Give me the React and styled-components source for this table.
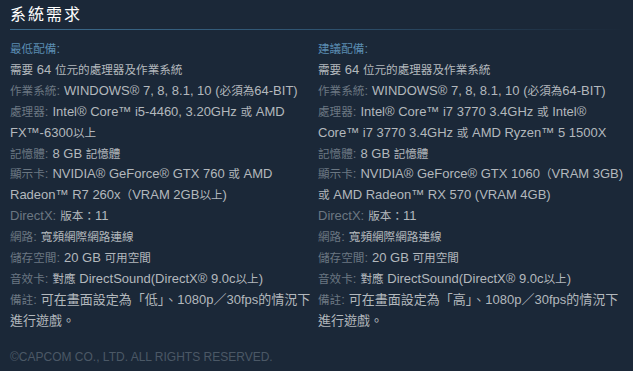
import React from "react";
import styled, { createGlobalStyle } from "styled-components";

const GlobalStyle = createGlobalStyle`
  html, body {
    margin: 0;
    padding: 0;
    background: #1b2838;
  }
  body {
    font-family: "Liberation Sans", Arial, "Noto Sans CJK TC", sans-serif;
  }
`;

const Wrapper = styled.div`
  width: 633px;
  height: 371px;
  box-sizing: border-box;
  padding: 4px 10px 0 10px;
  background: #1b2838;
  color: #b3b8bd;
  overflow: hidden;
`;

const Title = styled.h2`
  margin: 0;
  font-size: 16px;
  font-weight: normal;
  letter-spacing: 2px;
  color: #ffffff;
  line-height: 22px;
  padding-bottom: 3px;
  border-bottom: 1px solid transparent;
  border-image: linear-gradient(to right, #3d6c8d 0%, #2f5370 50%, #1b2838 100%) 1;
`;

const Columns = styled.div`
  display: grid;
  grid-template-columns: 304px 308px;
  column-gap: 4px;
  margin-top: 9px;
`;

const Column = styled.div`
  font-size: 13px;
  line-height: 20.9px;
`;

const Heading = styled.div`
  color: #5a8cb1;
`;

const List = styled.ul`
  list-style: none;
  margin: 0;
  padding: 0;
`;

const Cjk = styled.span`
  font-family: "Noto Sans CJK TC", sans-serif;
  font-size: 11.6px;
  line-height: 1;
`;

const Item = styled.li`
  margin: 0;
  ${Cjk} {
    font-size: ${(p) => (p.$wide ? "13px" : "11.6px")};
  }
`;

const Label = styled.span`
  color: #6b7782;
  margin-right: 4px;
  ${Cjk} {
    font-size: 11.6px;
  }
`;

const Copyright = styled.div`
  margin-top: 18px;
  font-size: 12px;
  color: #4b5866;
`;

const CJK_RE = /([\u3000-\u303f\u3400-\u9fff\uff00-\uffef]+)/;

const Text = ({ children }) =>
  children.split(CJK_RE).map((part, i) =>
    i % 2 === 1 ? <Cjk key={i}>{part}</Cjk> : part
  );

const minimum = [
  [null, "需要 64 位元的處理器及作業系統"],
  ["作業系統:", "WINDOWS® 7, 8, 8.1, 10 (必須為64-BIT)"],
  ["處理器:", "Intel® Core™ i5-4460, 3.20GHz 或 AMD FX™-6300以上"],
  ["記憶體:", "8 GB 記憶體"],
  ["顯示卡:", "NVIDIA® GeForce® GTX 760 或 AMD Radeon™ R7 260x（VRAM 2GB以上)"],
  ["DirectX:", "版本：11"],
  ["網路:", "寬頻網際網路連線"],
  ["儲存空間:", "20 GB 可用空間"],
  ["音效卡:", "對應 DirectSound(DirectX® 9.0c以上)"],
  ["備註:", "可在畫面設定為「低」、1080p／30fps的情況下進行遊戲。", true],
];

const recommended = [
  [null, "需要 64 位元的處理器及作業系統"],
  ["作業系統:", "WINDOWS® 7, 8, 8.1, 10 (必須為64-BIT)"],
  ["處理器:", "Intel® Core™ i7 3770 3.4GHz 或 Intel® Core™ i7 3770 3.4GHz 或 AMD Ryzen™ 5 1500X"],
  ["記憶體:", "8 GB 記憶體"],
  ["顯示卡:", "NVIDIA® GeForce® GTX 1060（VRAM 3GB) 或 AMD Radeon™ RX 570 (VRAM 4GB)"],
  ["DirectX:", "版本：11"],
  ["網路:", "寬頻網際網路連線"],
  ["儲存空間:", "20 GB 可用空間"],
  ["音效卡:", "對應 DirectSound(DirectX® 9.0c以上)"],
  ["備註:", "可在畫面設定為「高」、1080p／30fps的情況下進行遊戲。", true],
];

const ReqColumn = ({ title, rows }) => (
  <Column>
    <Heading><Text>{title}</Text></Heading>
    <List>
      {rows.map(([label, value, wide], i) => (
        <Item key={i} $wide={wide}>
          {label && <Label><Text>{label}</Text></Label>}
          <Text>{value}</Text>
        </Item>
      ))}
    </List>
  </Column>
);

const App = () => {
  return (
    <Wrapper>
      <GlobalStyle />
      <Title>系統需求</Title>
      <Columns>
        <ReqColumn title="最低配備:" rows={minimum} />
        <ReqColumn title="建議配備:" rows={recommended} />
      </Columns>
      <Copyright>©CAPCOM CO., LTD. ALL RIGHTS RESERVED.</Copyright>
    </Wrapper>
  );
};

export default App;
